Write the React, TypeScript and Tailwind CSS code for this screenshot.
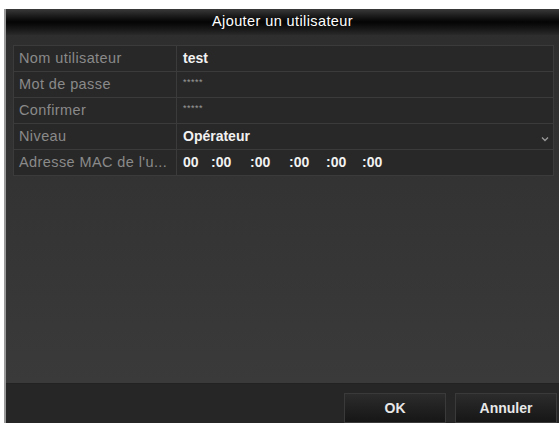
const rows = [
  { label: "Nom utilisateur", value: "test", kind: "text" },
  { label: "Mot de passe", value: "*****", kind: "pwd" },
  { label: "Confirmer", value: "*****", kind: "pwd" },
  { label: "Niveau", value: "Opérateur", kind: "select" },
  { label: "Adresse MAC de l'u...", value: "", kind: "mac" },
];

const App = function () {
  return (
    <div className="w-[559px] h-[423px] bg-white pl-[4px] pt-[9px] overflow-hidden font-['Liberation_Sans',Arial,sans-serif]">
      <div className="w-[555px] h-[414px] flex flex-col border-l-2 border-[#9a9a9a] bg-[#2f2f2f]">
        <div className="h-[26px] flex items-center justify-center bg-gradient-to-b from-[#3a3a3a] via-[#050505] to-[#2a2a2a] text-[14.5px] tracking-[0.4px] text-white">
          Ajouter un utilisateur
        </div>
        <div className="flex-1 bg-gradient-to-b from-[#2e2e2e] to-[#3a3a3a] pt-[10px] pl-[7px] pr-[5px]">
          <div className="flex flex-col gap-px bg-[#3b3b3b] border border-[#3b3b3b]">
            {rows.map((r) => (
              <div key={r.label} className="flex h-[25px] gap-px">
                <div className="w-[162px] flex items-center pl-[5px] bg-[#282828] text-[14.5px] tracking-[0.4px] text-[#8a8a8a] whitespace-nowrap overflow-hidden">
                  {r.label}
                </div>
                <div className="flex-1 flex items-center pl-[6px] pr-[4px] bg-[#282828] text-[14px] text-[#f2f2f2] font-bold">
                  {r.kind == "pwd" && (
                    <span className="text-[9px] text-[#9a9a9a] font-normal tracking-[0.5px] -mt-[4px]">
                      {r.value}
                    </span>
                  )}
                  {(r.kind == "text" || r.kind == "select") && (
                    <span className="flex-1">{r.value}</span>
                  )}
                  {r.kind == "select" && (
                    <svg width="8" height="6" viewBox="0 0 8 6" className="mt-[4px]">
                      <path d="M1 1.5 L4 4.5 L7 1.5" stroke="#9a9a9a" strokeWidth="1.3" fill="none" />
                    </svg>
                  )}
                  {r.kind == "mac" && (
                    <div className="flex">
                      <span className="w-[28px]">00</span>
                      <span className="w-[39px]">:00</span>
                      <span className="w-[39px]">:00</span>
                      <span className="w-[37px]">:00</span>
                      <span className="w-[36px]">:00</span>
                      <span>:00</span>
                    </div>
                  )}
                </div>
              </div>
            ))}
          </div>
        </div>
        <div className="h-[40px] bg-[#262626] border-t border-[#222] flex justify-end items-start pt-[9px] pr-[2px] gap-[9px]">
          <button className="w-[102px] h-[30px] bg-gradient-to-b from-[#2c2c2c] to-[#161616] border border-[#3a3a3a] text-[14px] font-bold text-[#e8e8e8]">
            OK
          </button>
          <button className="w-[102px] h-[30px] bg-gradient-to-b from-[#2c2c2c] to-[#161616] border border-[#3a3a3a] text-[14px] font-bold text-[#e8e8e8]">
            Annuler
          </button>
        </div>
      </div>
    </div>
  );
};

export default App;
